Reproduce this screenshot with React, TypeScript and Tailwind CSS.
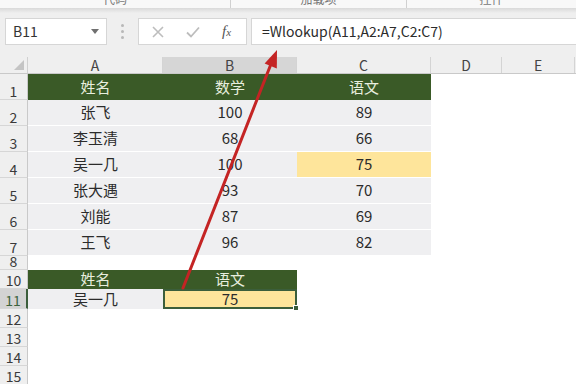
import React from "react";

const FONT = { fontFamily: '"Noto Sans CJK SC", "Noto Sans", "Liberation Sans", sans-serif' };

type Cell = { text?: string; kind: "green" | "gray" | "yellow" | "white" | "sel" };

const COLS = ["w-[135px]", "w-[134px]", "w-[134px]", "w-[71px]", "w-[73px]"];

function DataCell({ cell, w, sep }: { cell: Cell; w: string; sep: boolean }) {
  let cls = "";
  if (cell.kind === "green") cls = "bg-[#3a5a27] text-[#e8eedf]";
  else if (cell.kind === "gray") cls = "bg-[#efeff1] text-[#2b2b2b]";
  else if (cell.kind === "yellow") cls = "bg-[#fee59b] text-[#2b2b2b]";
  else if (cell.kind === "sel") cls = "bg-[#fee59b] text-[#2b2b2b] border-2 border-[#3b5e3b] relative";
  else cls = "bg-white";
  const border = sep && cell.kind !== "white" && cell.kind !== "sel" ? "border-b border-white" : "";
  return (
    <div className={`${w} shrink-0 h-full flex items-center justify-center text-[15px] ${cls} ${border}`}>
      {cell.text}
      {cell.kind === "sel" && (
        <div className="absolute -right-[4px] -bottom-[4px] w-[6px] h-[6px] bg-[#3b5e3b] border border-white" />
      )}
    </div>
  );
}

function Row({ n, h, cells, sel, sep }: { n: string; h: string; cells: Cell[]; sel?: boolean; sep?: boolean }) {
  return (
    <div className={`flex ${h}`}>
      <div
        className={`w-[28px] shrink-0 h-full overflow-hidden flex items-end justify-center text-[14px] leading-[13px] pb-[1px] border-b border-[#d6d6d6] ${
          sel ? "bg-[#d3d3d3] text-[#3d633d] border-r-2 border-r-[#3b5e3b]" : "bg-[#efefef] text-[#3a3a3a] border-r border-r-[#c9c9c9]"
        }`}
      >
        {n}
      </div>
      {cells.map((c, i) => (
        <DataCell key={i} cell={c} w={COLS[i]} sep={!!sep} />
      ))}
      <div className="flex-1 bg-white" />
    </div>
  );
}

const W: Cell = { kind: "white" };

export default function App() {
  const data: [string, string, string][] = [
    ["张飞", "100", "89"],
    ["李玉清", "68", "66"],
    ["吴一几", "100", "75"],
    ["张大遇", "93", "70"],
    ["刘能", "87", "69"],
    ["王飞", "96", "82"],
  ];
  return (
    <div className="relative w-[576px] h-[384px] overflow-hidden bg-white" style={FONT}>
      {/* ribbon bottom strip */}
      <div className="flex h-[8px] bg-[#f8f8f8] overflow-hidden text-[12px] text-[#777]">
        <div className="w-[231px] border-r border-[#d0d0d0] flex justify-center">
          <span className="-mt-[9px] leading-[16px]">代码</span>
        </div>
        <div className="w-[176px] border-r border-[#d0d0d0] flex justify-center">
          <span className="-mt-[9px] leading-[16px]">加载项</span>
        </div>
        <div className="flex-1 flex justify-center">
          <span className="-mt-[9px] leading-[16px]">控件</span>
        </div>
      </div>
      <div className="h-[5px] bg-gradient-to-b from-[#d9d9d9] to-[#efefef]" />
      {/* formula bar */}
      <div className="flex bg-[#efefef] pt-[5px] pb-[12px]">
        <div className="ml-[5px] w-[102px] h-[27px] bg-white border border-[#d6d6d6] flex items-center justify-between pl-[7px] pr-[7px]">
          <span className="text-[14px] text-[#333]">B11</span>
          <svg width="8" height="5" viewBox="0 0 8 5">
            <path d="M0 0 L8 0 L4 5 Z" fill="#707070" />
          </svg>
        </div>
        <div className="w-[31px] flex flex-col items-center justify-center gap-[3px]">
          <div className="w-[3px] h-[3px] rounded-full bg-[#b8b8b8]" />
          <div className="w-[3px] h-[3px] rounded-full bg-[#b8b8b8]" />
          <div className="w-[3px] h-[3px] rounded-full bg-[#b8b8b8]" />
        </div>
        <div className="w-[109px] h-[27px] bg-white border border-[#d6d6d6] flex items-center">
          <svg className="ml-[13px]" width="12" height="12" viewBox="0 0 12 12">
            <path d="M1 1 L11 11 M11 1 L1 11" stroke="#bdbdbd" strokeWidth="1.6" />
          </svg>
          <svg className="ml-[22px]" width="14" height="12" viewBox="0 0 14 12">
            <path d="M1 6.5 L5 10.5 L13 1.5" stroke="#bdbdbd" strokeWidth="1.8" fill="none" />
          </svg>
          <span
            className="ml-[22px] text-[15px] italic text-[#555]"
            style={{ fontFamily: '"Liberation Serif", "DejaVu Serif", serif' }}
          >
            f<span className="text-[11px]">x</span>
          </span>
        </div>
        <div className="ml-[4px] flex-1 h-[27px] bg-white border border-[#d6d6d6] border-r-0 flex items-center pl-[10px]">
          <span className="text-[14px] text-[#2b2b2b]">=Wlookup(A11,A2:A7,C2:C7)</span>
        </div>
      </div>
      {/* column headers */}
      <div className="flex h-[17px] bg-[#efefef] border-b border-[#c9c9c9] text-[14px] text-[#444] leading-[16px]">
        <div className="w-[28px] shrink-0 border-r border-[#d0d0d0] relative">
          <svg className="absolute right-[3px] bottom-[3px]" width="10" height="10" viewBox="0 0 10 10">
            <path d="M10 0 L10 10 L0 10 Z" fill="#c4c4c4" />
          </svg>
        </div>
        {["A", "B", "C", "D", "E"].map((l, i) => (
          <div
            key={l}
            className={`${COLS[i]} shrink-0 flex items-center justify-center border-r border-[#d4d4d4] ${
              l === "B" ? "bg-[#d6d6d6]" : ""
            }`}
          >
            {l}
          </div>
        ))}
        <div className="flex-1" />
      </div>
      {/* rows */}
      <Row
        n="1"
        h="h-[26px]"
        cells={[
          { kind: "green", text: "姓名" },
          { kind: "green", text: "数学" },
          { kind: "green", text: "语文" },
          W,
          W,
        ]}
      />
      {data.map((r, i) => (
        <Row
          key={i}
          n={String(i + 2)}
          h="h-[26px]"
          sep
          cells={[
            { kind: "gray", text: r[0] },
            { kind: "gray", text: r[1] },
            { kind: i === 2 ? "yellow" : "gray", text: r[2] },
            W,
            W,
          ]}
        />
      ))}
      <Row n="8" h="h-[14px]" cells={[W, W, W, W, W]} />
      <Row
        n="10"
        h="h-[19px]"
        cells={[{ kind: "green", text: "姓名" }, { kind: "green", text: "语文" }, W, W, W]}
      />
      <Row
        n="11"
        h="h-[20px]"
        sel
        cells={[{ kind: "gray", text: "吴一几" }, { kind: "sel", text: "75" }, W, W, W]}
      />
      <Row n="12" h="h-[19px]" cells={[W, W, W, W, W]} />
      <Row n="13" h="h-[19px]" cells={[W, W, W, W, W]} />
      <Row n="14" h="h-[19px]" cells={[W, W, W, W, W]} />
      <Row n="15" h="h-[19px]" cells={[W, W, W, W, W]} />
      {/* red arrow overlay */}
      <svg className="absolute left-0 top-0 pointer-events-none" width="576" height="384" viewBox="0 0 576 384">
        <line x1="183" y1="288" x2="271" y2="64" stroke="#c42424" strokeWidth="3" strokeLinecap="round" />
        <polygon points="277,50 276.8,68.5 264.6,63.6" fill="#c42424" />
      </svg>
    </div>
  );
}
